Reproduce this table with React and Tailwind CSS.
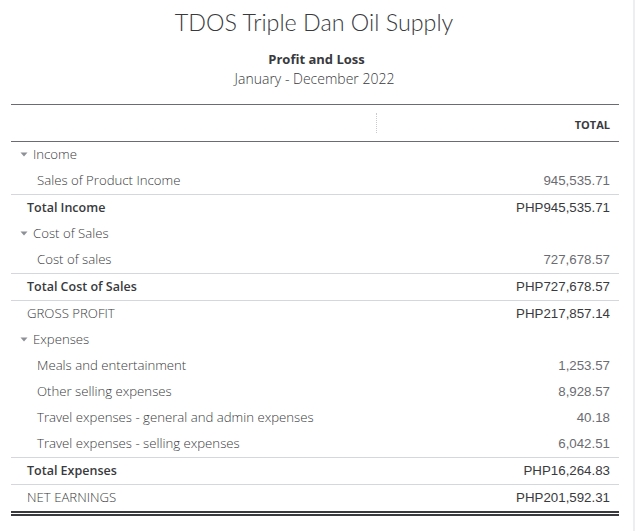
const rows = [
    { label: 'Income', type: 'group' },
    { label: 'Sales of Product Income', value: '945,535.71', type: 'item' },
    { label: 'Total Income', value: 'PHP945,535.71', type: 'total', line: true },
    { label: 'Cost of Sales', type: 'group' },
    { label: 'Cost of sales', value: '727,678.57', type: 'item' },
    { label: 'Total Cost of Sales', value: 'PHP727,678.57', type: 'total', line: true },
    { label: 'GROSS PROFIT', value: 'PHP217,857.14', type: 'summary', line: true },
    { label: 'Expenses', type: 'group' },
    { label: 'Meals and entertainment', value: '1,253.57', type: 'item' },
    { label: 'Other selling expenses', value: '8,928.57', type: 'item' },
    { label: 'Travel expenses - general and admin expenses', value: '40.18', type: 'item' },
    { label: 'Travel expenses - selling expenses', value: '6,042.51', type: 'item' },
    { label: 'Total Expenses', value: 'PHP16,264.83', type: 'total', line: true },
    { label: 'NET EARNINGS', value: 'PHP201,592.31', type: 'summary', line: true },
];

function Caret() {
    return (
        <svg width="8" height="5" viewBox="0 0 8 5" className="mr-[5px] shrink-0">
            <path d="M0.5 0.5 L7.5 0.5 L4 4.5 Z" fill="#8d9096" />
        </svg>
    );
}

function Row({ row }) {
    // indent + weight per row kind
    const labelCls =
        row.type === 'group'
            ? 'pl-[9px] font-light text-[13.2px]'
            : row.type === 'item'
            ? 'pl-[26px] font-light text-[13.2px]'
            : row.type === 'total'
            ? 'pl-[16px] font-semibold text-[12.5px]'
            : 'pl-[16px] font-light text-[13.2px]';
    const valueCls =
        row.type === 'item' ? 'text-[#6b6c72]' : 'text-[#393a3d]';

    return (
        <div className={`flex h-[26px] items-center justify-between ${row.line ? 'border-t border-[#d4d7dc] box-content' : ''}`}>
            <div className={`flex items-center font-['Open_Sans',sans-serif] text-[#393a3d] ${labelCls}`}>
                {row.type === 'group' && <Caret />}
                {row.label}
            </div>
            {row.value && (
                <div className={`pr-[9px] font-['Liberation_Sans',Arial,sans-serif] text-[13.3px] ${valueCls}`}>
                    {row.value}
                </div>
            )}
        </div>
    );
}

export default function App() {
    return (
        <div className="flex h-[531px] w-[635px] bg-white">
            <div className="flex-1">
                {/* Report header */}
                <div className="flex flex-col items-center pt-[7px] text-[#393a3d]">
                    <h1 className="-ml-[5px] font-['Lato',sans-serif] text-[23.3px] font-light leading-[30px]">
                        TDOS Triple Dan Oil Supply
                    </h1>
                    <div className="mt-[14px] font-['Open_Sans',sans-serif] text-[13px] font-bold leading-[17px]">
                        Profit and Loss
                    </div>
                    <div className="mt-[2px] -ml-[4px] font-['Open_Sans',sans-serif] text-[14px] font-light leading-[18px]">
                        January - December 2022
                    </div>
                </div>

                {/* Table */}
                <div className="ml-[11px] mt-[16px] w-[608px]">
                    <div className="flex h-[36px] border-y border-[#6b6c72] box-content">
                        <div className="w-[366px] py-[8px]">
                            <div className="ml-auto h-full w-0 border-r border-dotted border-[#c8cacf]" />
                        </div>
                        <div className="flex flex-1 items-center justify-end pt-[4px] pr-[9px] font-['Open_Sans',sans-serif] text-[11px] font-bold text-[#393a3d]">
                            TOTAL
                        </div>
                    </div>
                    {rows.map(r => (
                        <Row key={r.label} row={r} />
                    ))}
                    <div className="border-t-[5px] border-double border-[#393a3d]" />
                </div>
            </div>
            <div className="w-[2px] bg-[#eceef2]" />
        </div>
    );
}
